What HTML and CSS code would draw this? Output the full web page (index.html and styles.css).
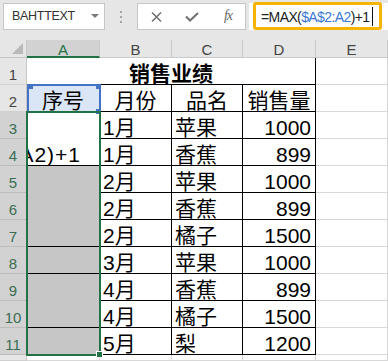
FILE: index.html
```html
<!DOCTYPE html>
<html lang="zh">
<head>
    <meta charset="UTF-8">
    <title>销售业绩</title>
    <link rel="stylesheet" href="styles.css">
</head>
<body>
    <div class="toolbar">
        <div class="namebox">
            <span class="name">BAHTTEXT</span>
            <span class="drop"></span>
        </div>
        <div class="grip"><i></i><i></i><i></i></div>
        <div class="fxbox">
            <span class="tool">
                <svg width="11" height="10" viewBox="0 0 11 10"><path d="M1 0.5 L10 9.5 M10 0.5 L1 9.5" stroke="#707070" stroke-width="1.5" fill="none"/></svg>
            </span>
            <span class="tool">
                <svg width="14" height="10" viewBox="0 0 14 10"><path d="M1 4.5 L5 8.5 L13 1" stroke="#707070" stroke-width="2" fill="none"/></svg>
            </span>
            <span class="tool fx">fx</span>
        </div>
        <div class="formula">
            <div class="edit">=MAX(<span class="ref">$A$2:A2</span>)+1<span class="caret"></span></div>
        </div>
    </div>

    <div class="sheet">
        <!-- column headers -->
        <div class="corner"><span class="tri"></span></div>
        <div class="ch on">A</div>
        <div class="ch">B</div>
        <div class="ch">C</div>
        <div class="ch">D</div>
        <div class="ch">E</div>

        <div class="rh">1</div>
        <div class="c bk title">销售业绩</div>
        <div class="c"></div>

        <div class="rh">2</div>
        <div class="c bk mid hdr">序号</div>
        <div class="c bk mid">月份</div>
        <div class="c bk mid">品名</div>
        <div class="c bk mid">销售量</div>
        <div class="c"></div>

        <div class="rh sel">3</div>
        <div class="c bk open"></div>
        <div class="c bk">1月</div>
        <div class="c bk">苹果</div>
        <div class="c bk num">1000</div>
        <div class="c"></div>

        <div class="rh sel">4</div>
        <div class="c bk typing"><span>A2)+1</span></div>
        <div class="c bk">1月</div>
        <div class="c bk">香蕉</div>
        <div class="c bk num">899</div>
        <div class="c"></div>

        <div class="rh sel">5</div>
        <div class="c bk grey open"></div>
        <div class="c bk">2月</div>
        <div class="c bk">苹果</div>
        <div class="c bk num">1000</div>
        <div class="c"></div>

        <div class="rh sel">6</div>
        <div class="c bk grey open"></div>
        <div class="c bk">2月</div>
        <div class="c bk">香蕉</div>
        <div class="c bk num">899</div>
        <div class="c"></div>

        <div class="rh sel">7</div>
        <div class="c bk grey"></div>
        <div class="c bk">2月</div>
        <div class="c bk">橘子</div>
        <div class="c bk num">1500</div>
        <div class="c"></div>

        <div class="rh sel">8</div>
        <div class="c bk grey"></div>
        <div class="c bk">3月</div>
        <div class="c bk">苹果</div>
        <div class="c bk num">1000</div>
        <div class="c"></div>

        <div class="rh sel">9</div>
        <div class="c bk grey open"></div>
        <div class="c bk">4月</div>
        <div class="c bk">香蕉</div>
        <div class="c bk num">899</div>
        <div class="c"></div>

        <div class="rh sel">10</div>
        <div class="c bk grey"></div>
        <div class="c bk">4月</div>
        <div class="c bk">橘子</div>
        <div class="c bk num">1500</div>
        <div class="c"></div>

        <div class="rh sel">11</div>
        <div class="c bk grey"></div>
        <div class="c bk">5月</div>
        <div class="c bk">梨</div>
        <div class="c bk num">1200</div>
        <div class="c"></div>

        <div class="rh"></div>
        <div class="c"></div>
        <div class="c"></div>
        <div class="c"></div>
        <div class="c"></div>
        <div class="c"></div>

        <!-- selection overlays -->
        <div class="refbox"><i class="k1"></i><i class="k2"></i><i class="k3"></i></div>
        <div class="selbox"></div>
        <div class="handle"></div>
    </div>
</body>
</html>
```

FILE: styles.css
```css
* {
    box-sizing: border-box;
}
body {
    margin: 0;
    background-color: #e6e6e6;
    font-family: "Liberation Sans", "Noto Sans CJK SC", sans-serif;
    overflow: hidden;
}

/* formula bar */
.toolbar {
    display: flex;
    align-items: flex-start;
    height: 40px;
    padding-top: 3px;
}
.namebox {
    display: flex;
    align-items: center;
    justify-content: space-between;
    margin-left: 3px;
    width: 102px;
    height: 27px;
    background-color: #fff;
    border: 1px solid #c6c6c6;
    padding: 0 5px 1px 8px;
}
.name {
    font-size: 12.5px;
    letter-spacing: -0.3px;
    color: #333;
}
.drop {
    width: 0;
    height: 0;
    border-left: 4px solid transparent;
    border-right: 4px solid transparent;
    border-top: 4px solid #7a7a7a;
}
.grip {
    display: flex;
    flex-direction: column;
    gap: 3px;
    margin-left: 15px;
    padding-top: 8px;
}
.grip i {
    display: block;
    width: 2px;
    height: 2px;
    background-color: #a5a5a5;
}
.fxbox {
    display: grid;
    grid-template-columns: 36px 36px 36px;
    align-items: center;
    margin-left: 15px;
    width: 109px;
    height: 27px;
    background-color: #fff;
    border: 1px solid #c6c6c6;
}
.tool {
    display: flex;
    justify-content: center;
    align-items: center;
}
.fx {
    font-family: "Liberation Serif", serif;
    font-style: italic;
    font-size: 14px;
    color: #666;
    letter-spacing: -1px;
    padding-bottom: 2px;
}
.formula {
    flex: 1;
    margin-left: 3px;
    height: 27px;
    background-color: #fff;
}
.edit {
    display: flex;
    align-items: center;
    margin-left: 4px;
    margin-top: -1px;
    width: 129px;
    height: 28px;
    border: 3px solid #f5b400;
    border-radius: 3px;
    padding: 1px 0 0 5px;
    font-size: 14px;
    letter-spacing: -0.6px;
    color: #222;
    white-space: nowrap;
}
.ref {
    color: #3a78d2;
}
.caret {
    display: inline-block;
    width: 1px;
    height: 19px;
    margin-left: 2px;
    background-color: #111;
}

/* sheet */
.sheet {
    position: relative;
    display: grid;
    grid-template-columns: 27px 73px 72px 71px 73px 72px;
    grid-template-rows: 18px repeat(11, 27px) 6px;
    background-color: #fff;
}
.corner {
    position: relative;
    background-color: #e6e6e6;
    border-right: 1px solid #c6c6c6;
    border-bottom: 1px solid #c6c6c6;
}
.tri {
    position: absolute;
    right: 3px;
    bottom: 3px;
    width: 0;
    height: 0;
    border-left: 11px solid transparent;
    border-bottom: 11px solid #b9b9b9;
}
.ch {
    background-color: #e6e6e6;
    border-right: 1px solid #c9c9c9;
    border-bottom: 1px solid #c9c9c9;
    text-align: center;
    font-size: 15px;
    line-height: 15px;
    padding-top: 2px;
    color: #444;
}
.ch.on {
    background-color: #d2d2d2;
    color: #217346;
    border-bottom: 2px solid #217346;
}
.rh {
    display: flex;
    justify-content: center;
    align-items: flex-end;
    background-color: #e6e6e6;
    border-right: 1px solid #c6c6c6;
    border-bottom: 1px solid #d0d0d0;
    font-size: 15px;
    line-height: 15px;
    padding-bottom: 2px;
    color: #444;
}
.rh.sel {
    background-color: #d2d2d2;
    color: #3b6d52;
    border-bottom-color: #bcbcbc;
}
.c {
    display: flex;
    align-items: flex-end;
    border-right: 1px solid #d8d8d8;
    border-bottom: 1px solid #d8d8d8;
    padding: 0 3px;
    font-size: 21px;
    line-height: 20px;
    color: #000;
    white-space: nowrap;
    overflow: hidden;
}
.c.bk {
    border-right-color: #000;
    border-bottom-color: #000;
}
.title {
    grid-column: span 4;
    justify-content: center;
    font-weight: bold;
}
.mid {
    justify-content: center;
}
.num {
    justify-content: flex-end;
    padding-right: 4px;
}
.hdr {
    background-color: #dae5f5;
}
.c.open {
    border-bottom-color: transparent;
}
.grey {
    background-color: #c6c6c6;
}
.typing {
    justify-content: flex-end;
    padding-left: 0;
    padding-right: 18px;
    letter-spacing: 1px;
}

/* selection overlays */
.refbox {
    position: absolute;
    left: 27px;
    top: 44px;
    width: 74px;
    height: 29px;
    border: 2px solid #4472c4;
}
.refbox i {
    position: absolute;
    width: 5px;
    height: 5px;
    background-color: #4472c4;
}
.refbox .k1 {
    left: -1px;
    top: -2px;
}
.refbox .k2 {
    right: -2px;
    top: -2px;
}
.refbox .k3 {
    right: -2px;
    bottom: -3px;
}
.selbox {
    position: absolute;
    left: 26px;
    top: 71px;
    width: 75px;
    height: 245px;
    border: 2px solid #217346;
}
.handle {
    position: absolute;
    left: 96px;
    top: 311px;
    width: 7px;
    height: 7px;
    background-color: #217346;
    border: 1px solid #fff;
}
```
